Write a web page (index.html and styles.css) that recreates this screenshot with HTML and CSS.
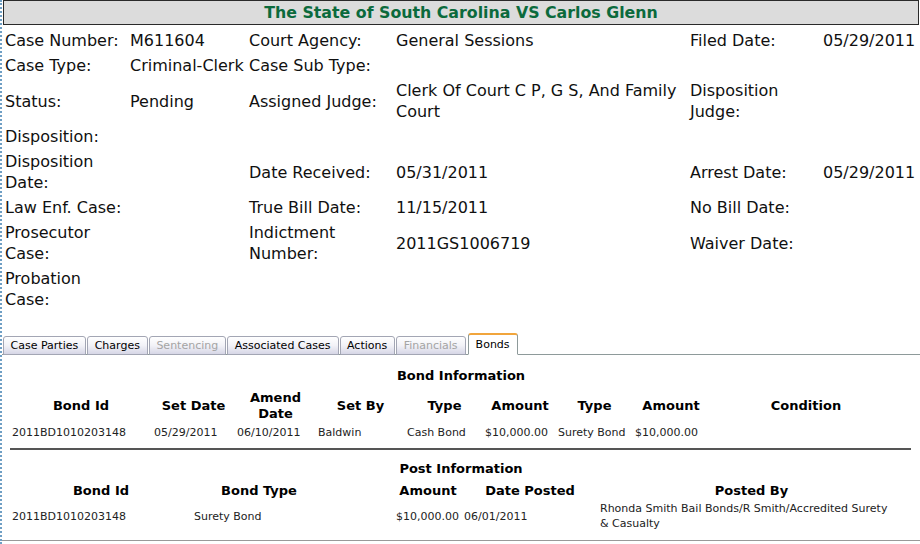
FILE: index.html
```html
<!DOCTYPE html>
<html lang="en">
<head>
    <meta charset="UTF-8">
    <title>Case Details</title>
    <link rel="stylesheet" href="styles.css">
</head>
<body>

    <h2 class="case-title">The State of South Carolina VS Carlos Glenn</h2>

    <table class="case-info">
        <colgroup>
            <col class="c1"><col class="c2"><col class="c3"><col class="c4"><col class="c5"><col class="c6">
        </colgroup>
        <tr>
            <td>Case Number:</td><td>M611604</td>
            <td>Court Agency:</td><td>General Sessions</td>
            <td>Filed Date:</td><td>05/29/2011</td>
        </tr>
        <tr>
            <td>Case Type:</td><td class="nowrap">Criminal-Clerk</td>
            <td>Case Sub Type:</td><td></td>
            <td></td><td></td>
        </tr>
        <tr>
            <td>Status:</td><td>Pending</td>
            <td>Assigned Judge:</td><td>Clerk Of Court C P, G S, And Family Court</td>
            <td>Disposition Judge:</td><td></td>
        </tr>
        <tr>
            <td>Disposition:</td><td></td>
            <td></td><td></td>
            <td></td><td></td>
        </tr>
        <tr>
            <td>Disposition Date:</td><td></td>
            <td>Date Received:</td><td>05/31/2011</td>
            <td>Arrest Date:</td><td>05/29/2011</td>
        </tr>
        <tr>
            <td>Law Enf. Case:</td><td></td>
            <td>True Bill Date:</td><td>11/15/2011</td>
            <td>No Bill Date:</td><td></td>
        </tr>
        <tr>
            <td>Prosecutor Case:</td><td></td>
            <td>Indictment Number:</td><td>2011GS1006719</td>
            <td>Waiver Date:</td><td></td>
        </tr>
        <tr>
            <td>Probation Case:</td><td></td>
            <td></td><td></td>
            <td></td><td></td>
        </tr>
    </table>

    <ul class="tabs">
        <li class="tab">Case Parties</li>
        <li class="tab">Charges</li>
        <li class="tab disabled">Sentencing</li>
        <li class="tab">Associated Cases</li>
        <li class="tab">Actions</li>
        <li class="tab disabled">Financials</li>
        <li class="tab active">Bonds</li>
    </ul>

    <div class="panel">
        <div class="section-title">Bond Information</div>
        <table class="grid bond-grid">
            <colgroup>
                <col class="w142"><col class="w83"><col class="w81">
                <col class="w89"><col class="w79"><col class="w72">
                <col class="w77"><col class="w76"><col>
            </colgroup>
            <thead>
                <tr>
                    <th>Bond Id</th><th>Set Date</th><th>Amend Date</th><th>Set By</th>
                    <th>Type</th><th>Amount</th><th>Type</th><th>Amount</th><th>Condition</th>
                </tr>
            </thead>
            <tbody>
                <tr>
                    <td>2011BD1010203148</td><td>05/29/2011</td><td>06/10/2011</td><td>Baldwin</td>
                    <td>Cash Bond</td><td class="nudge">$10,000.00</td><td class="nowrap">Surety Bond</td><td>$10,000.00</td><td></td>
                </tr>
            </tbody>
        </table>

        <hr class="divider">

        <div class="section-title post">Post Information</div>
        <table class="grid post-grid">
            <colgroup>
                <col class="w182"><col class="w134"><col class="w68">
                <col class="w68"><col class="w136"><col>
            </colgroup>
            <thead>
                <tr>
                    <th>Bond Id</th><th>Bond Type</th><th></th><th>Amount</th><th>Date Posted</th><th>Posted By</th>
                </tr>
            </thead>
            <tbody>
                <tr>
                    <td>2011BD1010203148</td><td>Surety Bond</td><td></td><td>$10,000.00</td><td>06/01/2011</td>
                    <td>Rhonda Smith Bail Bonds/R Smith/Accredited Surety &amp; Casualty</td>
                </tr>
            </tbody>
        </table>
    </div>

</body>
</html>
```

FILE: styles.css
```css
body {
    margin: 0;
    padding: 0;
    min-height: 544px;
    font-family: "DejaVu Sans", Verdana, sans-serif;
    color: #000;
    background: #fff;
    border-left: 2px dotted #6f9fc4;
}
.case-title {
    margin: 0 1px 0 1px;
    height: 23px;
    line-height: 23px;
    background-color: #dcdcdc;
    border: 1px solid #2a2a2a;
    text-align: center;
    font-size: 15.8px;
    font-weight: bold;
    color: #0b6a3c;
}
.case-info {
    border-collapse: collapse;
    margin: 3px 0 0 1px;
    width: 916px;
    table-layout: fixed;
    font-size: 16px;
    color: #101010;
}
.case-info .c1 { width: 125px; }
.case-info .c2 { width: 119px; }
.case-info .c3 { width: 147px; }
.case-info .c4 { width: 294px; }
.case-info .c5 { width: 133px; }
.case-info td {
    padding: 2px;
    line-height: 21px;
    vertical-align: middle;
}
.nowrap {
    white-space: nowrap;
}
.tabs {
    list-style: none;
    display: flex;
    align-items: flex-end;
    gap: 1px;
    margin: 21px 0 0 0;
    padding: 0 0 0 1px;
    height: 21px;
    border-bottom: 1px solid #8e9a9a;
}
.tab {
    font-size: 11px;
    height: 17px;
    line-height: 17px;
    padding: 0 7px 0 6.5px;
    margin-bottom: -1px;
    border: 1px solid #a3a6b4;
    border-radius: 3px 3px 0 0;
    background: linear-gradient(#ffffff, #f2f2f7 50%, #d6d6e6);
    color: #000;
}
.tab.disabled {
    color: #a4a4a4;
}
.tab.active {
    height: 19px;
    line-height: 19px;
    padding: 0 7px;
    margin-left: 1px;
    background: #fff;
    border: 1px solid #8e9a9a;
    border-top: 2px solid #f1a53c;
    border-bottom: 1px solid #fff;
    border-radius: 3px 3px 0 0;
}
.panel {
    padding: 13px 0 0 0;
    height: 172px;
    border-bottom: 1px solid #999;
}
.section-title {
    text-align: center;
    font-size: 13px;
    font-weight: bold;
    line-height: 16px;
}
.grid {
    border-collapse: collapse;
    table-layout: fixed;
    margin-left: 8px;
}
.w142 { width: 142px; }
.w83 { width: 83px; }
.w81 { width: 81px; }
.w89 { width: 89px; }
.w79 { width: 79px; }
.w72 { width: 72px; }
.w77 { width: 77px; }
.w76 { width: 76px; }
.w182 { width: 182px; }
.w134 { width: 134px; }
.w68 { width: 68px; }
.w136 { width: 136px; }
.grid th {
    font-size: 13px;
    font-weight: bold;
    line-height: 16px;
    padding: 0 2px;
    text-align: center;
}
.grid td {
    font-size: 11px;
    line-height: 15px;
    padding: 0 2px;
    text-align: left;
    color: #222;
}
.grid td.nudge {
    padding-left: 1px;
}
.bond-grid {
    margin-top: 6px;
    width: 893px;
}
.bond-grid th {
    height: 32px;
}
.bond-grid td {
    padding-top: 3px;
}
.divider {
    margin: 8px 9px 0 8px;
    border: 0;
    border-top: 2px solid #555;
}
.section-title.post {
    margin-top: 11px;
}
.post-grid {
    width: 895px;
}
.post-grid th {
    padding-top: 6px;
}
.post-grid td {
    padding-top: 2px;
}
.post-grid td:last-child {
    padding-right: 10px;
}
```
